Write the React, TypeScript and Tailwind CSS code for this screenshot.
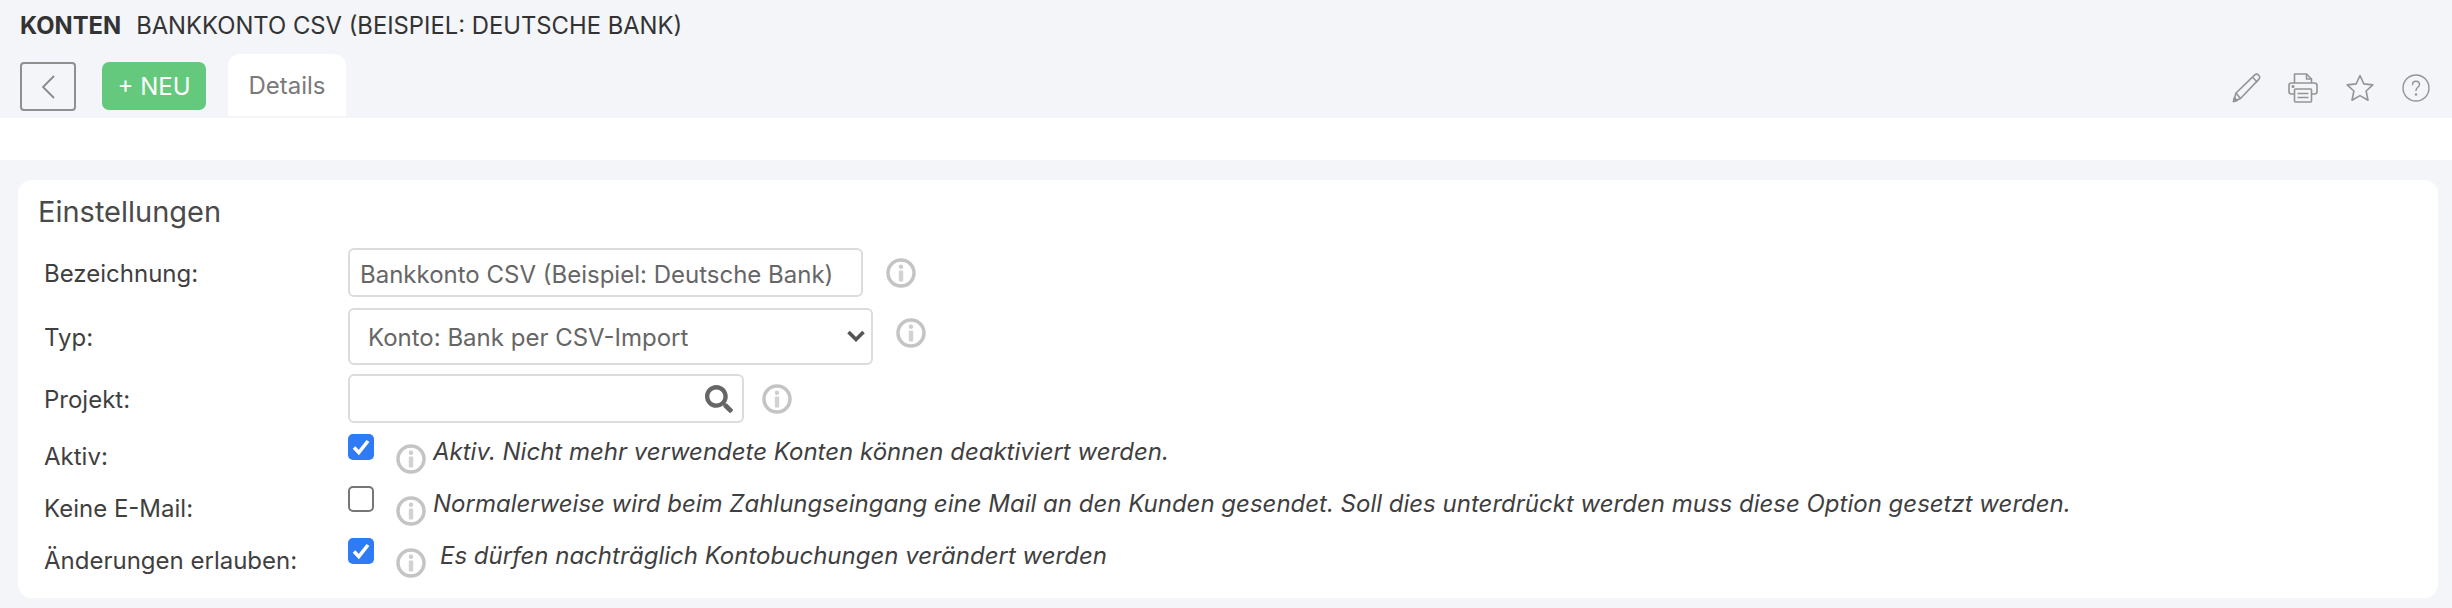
import React from "react";
import { FaSearch } from "react-icons/fa";

const InfoIcon = ({ className }: { className?: string }) => (
	<svg viewBox="0 0 30 30" className={`h-[30px] w-[30px] shrink-0 blur-[0.5px] ${className ?? ""}`} aria-hidden="true">
		<circle cx="15" cy="15" r="13" fill="none" stroke="#c4c4c4" strokeWidth="3.500" />
		<circle cx="15" cy="8.800" r="2.200" fill="#cdcdcd" />
		<rect x="12.800" y="12.500" width="4.400" height="11" rx="1" fill="#d2d2d2" />
	</svg>
);

const PencilIcon = () => (
	<svg viewBox="0 0 30 30" className="-mr-[2px] h-[30px] w-[30px]" fill="none" stroke="#949494" strokeWidth="1.6" strokeLinejoin="round">
		<path d="M1.500 28.500 4 20 22.500 2.200c1.400-1.300 3-1.200 4.200 0s1.400 2.900 0 4.200L8.500 25.500Z" />
		<path d="M4 20l4.500 5.500M20.500 4.200l5 5" />
		<path d="M1.500 28.500l1-3.800 2.800 2.800Z" fill="#949494" />
	</svg>
);

const PrinterIcon = () => (
	<svg viewBox="0 0 30 30" className="h-[30px] w-[30px]" fill="none" stroke="#949494" strokeWidth="1.6" strokeLinejoin="round">
		<path d="M6.500 10V1h12l5 5v4" />
		<path d="M18.500 1v5h5" />
		<path d="M6.500 21H3.500C2 21 1 20 1 18.500v-6C1 11 2 10 3.500 10h23c1.500 0 2.500 1 2.500 2.500v6c0 1.500-1 2.500-2.500 2.500h-3" />
		<rect x="6.500" y="16" width="17" height="13" rx="1" />
		<path d="M9.500 20.500h11M9.500 24.500h11" />
		<circle cx="5" cy="13.500" r="0.800" fill="#949494" />
	</svg>
);

const StarIcon = () => (
	<svg viewBox="0 0 28 28" className="h-[28px] w-[28px]" fill="none" stroke="#949494" strokeWidth="1.6" strokeLinejoin="round">
		<path d="M14 1.500l3.800 8.400 9 1-6.700 6.100 1.900 9.200L14 21.600l-8 4.600 1.900-9.200L1.200 10.900l9-1Z" />
	</svg>
);

const HelpIcon = () => (
	<svg viewBox="0 0 28 28" className="h-[28px] w-[28px]" fill="none" stroke="#949494" strokeWidth="1.4" strokeLinecap="round">
		<circle cx="14" cy="14" r="13" />
		<path d="M10.500 10.800c0-2.200 1.500-3.500 3.500-3.500s3.500 1.300 3.500 3.200c0 2.800-3.500 2.800-3.500 6" />
		<circle cx="14" cy="20.500" r="0.600" fill="#949494" />
	</svg>
);

const Label = ({ children }: { children: React.ReactNode }) => (
	<div className="w-[330px] shrink-0 pl-[26px] pt-[2px] text-[24px] text-[#3f3f3f]">{children}</div>
);

const CheckRow = ({ label, checked, text, textClass }: { label: string; checked: boolean; text: string; textClass?: string }) => (
	<div className="flex h-[52px] items-start">
		<div className="w-[330px] shrink-0 pl-[26px] pt-[5px] text-[24px] text-[#3f3f3f]">{label}</div>
		{checked ? (
			<div className="flex h-[26px] w-[26px] items-center justify-center rounded-[5px] bg-[#2f7bf5]">
				<svg viewBox="0 0 26 26" className="h-[26px] w-[26px]" fill="none" stroke="#fff" strokeWidth="3.600">
					<path d="M6 13.500l4.800 5L20 7" />
				</svg>
			</div>
		) : (
			<div className="h-[26px] w-[26px] rounded-[5px] border-2 border-[#767676] bg-white" />
		)}
		<InfoIcon className="mt-[10px] ml-[22px]" />
		<span className={`pl-[7px] text-[24px] italic text-[#3f3f3f] ${textClass ?? ""}`}>{text}</span>
	</div>
);

export default function App() {
	return (
		<div className="min-h-[608px] bg-[#f3f5f9] font-['Inter',sans-serif]">
			<header className="h-[118px]">
				<div className="flex items-center pt-[12px] pl-[20px] text-[23.800px] uppercase text-[#333] leading-[28px]">
					<b className="font-bold">Konten</b>
					<span className="ml-[15px]">Bankkonto CSV (Beispiel: Deutsche Bank)</span>
				</div>
				<div className="mt-[14px] flex items-start pl-[20px] pr-[22px]">
					<button className="mt-[8px] flex h-[49px] w-[56px] items-center justify-center rounded-[4px] border-2 border-[#8f8f8f]">
						<svg viewBox="0 0 16 26" className="h-[26px] w-[16px]" fill="none" stroke="#8a8a8a" strokeWidth="1.800">
							<path d="M14 2 3 13l11 11" />
						</svg>
					</button>
					<button className="mt-[8px] ml-[26px] h-[48px] w-[104px] rounded-[7px] bg-[#64c97c] pt-[1px] text-[24px] text-white">+ NEU</button>
					<div className="ml-[22px] flex h-[62px] w-[118px] items-center justify-center rounded-t-[12px] bg-white pt-[2px] text-[24px] text-[#7a7a7a]">Details</div>
					<div className="ml-auto flex items-center gap-[28px] pt-[19px]">
						<PencilIcon />
						<PrinterIcon />
						<StarIcon />
						<HelpIcon />
					</div>
				</div>
			</header>
			<div className="h-[42px] bg-white" />
			<main className="pl-[18px] pr-[14px] pt-[20px]">
				<section className="h-[418px] rounded-[14px] bg-white">
					<h2 className="pl-[20px] pt-[15px] text-[29px] leading-[34px] text-[#4a4a4a]">Einstellungen</h2>
					<div className="mt-[19px] flex flex-col">
						<div className="flex h-[49px] items-center">
							<Label>Bezeichnung:</Label>
							<input
								readOnly
								value="Bankkonto CSV (Beispiel: Deutsche Bank)"
								className="h-[49px] w-[515px] rounded-[6px] border-2 border-[#dcdcdc] bg-white px-[10px] pt-[3px] text-[24px] text-[#666]"
							/>
							<InfoIcon className="ml-[23px]" />
						</div>
						<div className="mt-[11px] flex h-[57px] items-center">
							<Label>Typ:</Label>
							<div className="relative">
								<select className="h-[57px] w-[525px] appearance-none rounded-[6px] border-2 border-[#dcdcdc] bg-white pl-[18px] pt-[2px] text-[24px] text-[#666]">
									<option>Konto: Bank per CSV-Import</option>
								</select>
								<svg viewBox="0 0 18 12" className="absolute right-[8px] top-[22px] h-[12px] w-[18px]" fill="none" stroke="#555" strokeWidth="3.600">
									<path d="M1.500 2 9 9.500 16.500 2" />
								</svg>
							</div>
							<InfoIcon className="ml-[23px] -mt-[7px]" />
						</div>
						<div className="mt-[9px] flex h-[49px] items-center">
							<Label>Projekt:</Label>
							<div className="flex h-[49px] w-[396px] items-center justify-end rounded-[6px] border-2 border-[#dcdcdc] bg-white pr-[9px]">
								<FaSearch className="h-[28px] w-[28px] text-[#666]" />
							</div>
							<InfoIcon className="ml-[18px]" />
						</div>
						<div className="mt-[11px] flex flex-col">
							<CheckRow label="Aktiv:" checked text="Aktiv. Nicht mehr verwendete Konten können deaktiviert werden." />
							<CheckRow label="Keine E-Mail:" checked={false} text="Normalerweise wird beim Zahlungseingang eine Mail an den Kunden gesendet. Soll dies unterdrückt werden muss diese Option gesetzt werden." />
							<CheckRow label="Änderungen erlauben:" checked text="Es dürfen nachträglich Kontobuchungen verändert werden" textClass="ml-[7px]" />
						</div>
					</div>
				</section>
			</main>
		</div>
	);
}
